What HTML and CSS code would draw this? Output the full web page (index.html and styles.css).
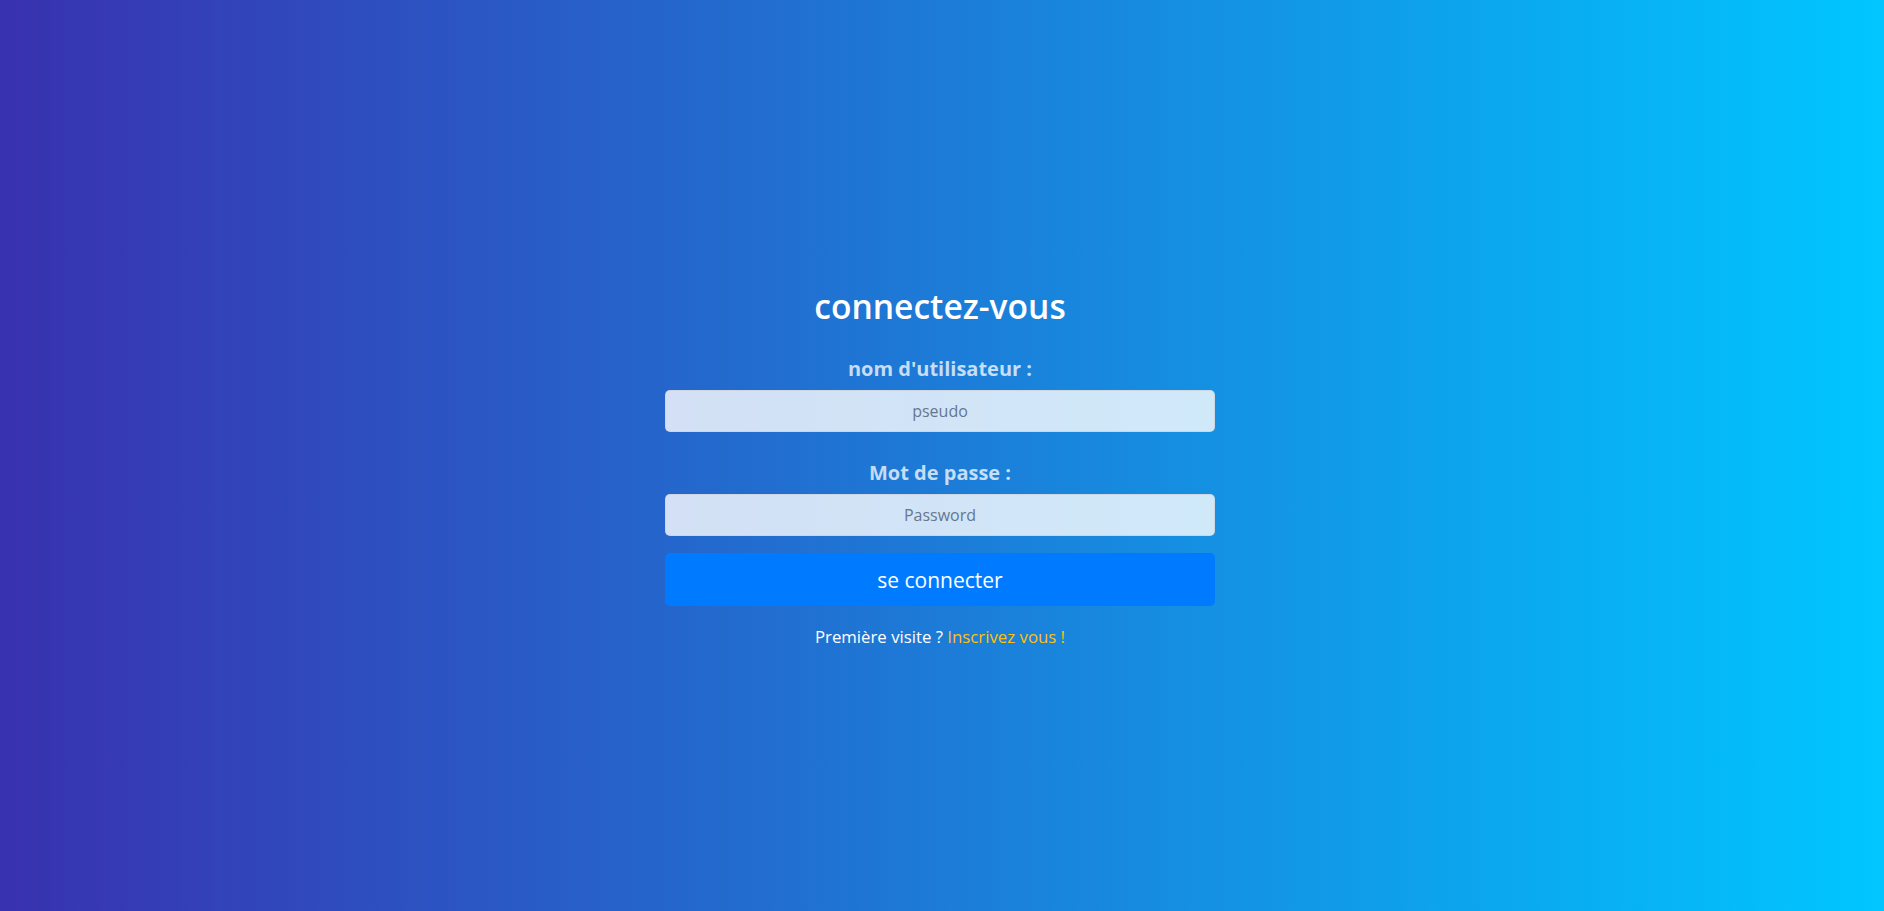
FILE: index.html
```html
<!DOCTYPE html>
<html lang="fr">
<head>
<meta charset="utf-8">
<title>Connexion</title>
<link rel="stylesheet" href="styles.css">
</head>
<body>
<main class="page">
  <form class="login">
    <h1 class="login-title">connectez-vous</h1>
    <label class="login-label" for="pseudo">nom d'utilisateur :</label>
    <input class="login-input" id="pseudo" type="text" placeholder="pseudo">
    <label class="login-label login-label-second" for="pwd">Mot de passe :</label>
    <input class="login-input" id="pwd" type="password" placeholder="Password">
    <button class="login-button" type="button">se connecter</button>
    <p class="login-footer">Première visite ? <a class="login-link" href="#">Inscrivez vous !</a></p>
  </form>
</main>
</body>
</html>
```
FILE: styles.css
```css
html, body {
  margin: 0;
  height: 100%;
}
body {
  background: linear-gradient(to right, #3931af, #00c6ff);
  font-family: "Open Sans", "Noto Sans", sans-serif;
  color: #fff;
}
.page {
  display: flex;
  justify-content: center;
  padding: 286px 4px 0 0;
}
.login {
  width: 550px;
  display: flex;
  flex-direction: column;
  align-items: stretch;
  text-align: center;
}
.login-title {
  margin: 0;
  font-size: 33.6px;
  font-weight: 600;
  line-height: 41px;
  color: #fff;
}
.login-label {
  margin-top: 28px;
  font-size: 20px;
  font-weight: 700;
  line-height: 28px;
  color: rgba(255, 255, 255, 0.75);
}
.login-label-second {
  margin-top: 27px;
}
.login-input {
  margin-top: 7px;
  height: 42px;
  box-sizing: border-box;
  border: 1px solid rgba(206, 212, 218, 0.85);
  border-radius: 5px;
  background: rgba(255, 255, 255, 0.8);
  font-family: inherit;
  font-size: 16px;
  text-align: center;
  color: #495057;
  padding: 0 12px;
}
.login-input::placeholder {
  color: #66768e;
}
.login-button {
  margin-top: 17px;
  height: 53px;
  border: 0;
  border-radius: 5px;
  background: #007bff;
  color: #fff;
  font-family: inherit;
  font-size: 21px;
  cursor: pointer;
}
.login-footer {
  margin: 19px 0 0;
  font-size: 16.8px;
  line-height: 24px;
  color: #fff;
}
.login-link {
  color: #ffc107;
  text-decoration: none;
}
```
